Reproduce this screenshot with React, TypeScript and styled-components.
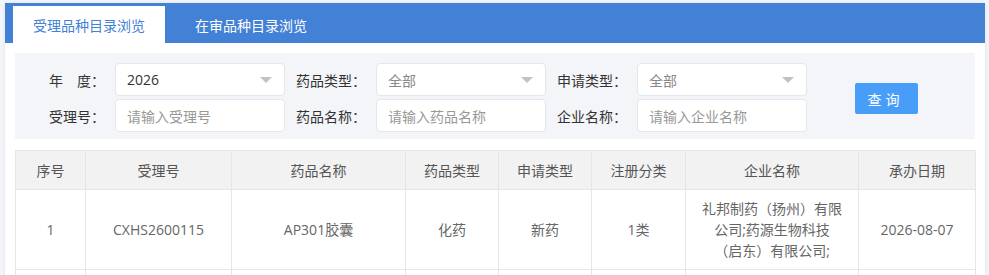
import styled, { createGlobalStyle } from "styled-components";

const GlobalStyle = createGlobalStyle`
  html, body {
    margin: 0;
    padding: 0;
    overflow: hidden;
    background: #f3f5f9;
    font-family: "Open Sans", "Noto Sans CJK SC", sans-serif;
  }
`;

const Card = styled.div`
  margin: 3px 4px 0 5px;
  background: #fff;
  box-shadow: 0 0 4px rgba(0, 0, 0, 0.08);
  padding-bottom: 20px;
`;

const TabBar = styled.div`
  display: flex;
  align-items: flex-end;
  height: 40px;
  background: #4381d6;
  padding-left: 8px;
  gap: 10px;
`;

const Tab = styled.div<{ $active?: boolean }>`
  height: 37px;
  padding: 0 20px;
  display: flex;
  align-items: center;
  font-size: 14px;
  color: ${p => (p.$active ? "#4381d6" : "#fff")};
  background: ${p => (p.$active ? "#fff" : "transparent")};
`;

const SearchPanel = styled.div`
  margin: 10px 10px 0;
  background: #f4f5f8;
  padding: 10px 0 7px;
  display: grid;
  grid-template-columns: 90px 170px 71px 170px 71px 170px 1fr;
  grid-template-rows: 33px 33px;
  column-gap: 10px;
  row-gap: 3px;
  align-items: center;
`;

const Label = styled.label`
  font-size: 14px;
  color: #333;
  text-align: right;
  white-space: nowrap;
`;

const Box = styled.div`
  box-sizing: border-box;
  height: 33px;
  background: #fff;
  border: 1px solid #e4e6eb;
  border-radius: 4px;
  padding: 0 11px;
  display: flex;
  align-items: center;
  justify-content: space-between;
  font-size: 14px;
`;

const Value = styled.span<{ $muted?: boolean }>`
  color: ${p => (p.$muted ? "#888" : "#333")};
`;

const Placeholder = styled.span`
  color: #999;
`;

const Arrow = styled.span`
  width: 0;
  height: 0;
  border-left: 6px solid transparent;
  border-right: 6px solid transparent;
  border-top: 6px solid #c2c2c2;
  margin-right: 1px;
`;

const ButtonCell = styled.div`
  grid-column: 7;
  grid-row: 1 / span 2;
  padding-left: 38px;
  padding-top: 2px;
`;

const QueryButton = styled.button`
  width: 63px;
  height: 31px;
  border: none;
  border-radius: 2px;
  background: #479df8;
  color: #fff;
  font-family: inherit;
  font-size: 14px;
  letter-spacing: 4px;
  padding-left: 4px;
`;

const Table = styled.table`
  margin: 11px 10px 0;
  width: 960px;
  border-collapse: collapse;
  table-layout: fixed;
  font-size: 14px;
  color: #666;
`;

const Th = styled.th`
  height: 38px;
  padding: 0;
  background: #f2f2f2;
  border: 1px solid #e6e6e6;
  font-weight: normal;
  color: #555;
  text-align: center;
`;

const Td = styled.td`
  height: 62px;
  padding: 8px 10px;
  border: 1px solid #e6e6e6;
  text-align: center;
  line-height: 21px;
`;

const Line = styled.div`
  white-space: nowrap;
`;

type Row = {
  no: number;
  accept: string;
  name: string;
  type: string;
  apply: string;
  reg: string;
  company: string[];
  date: string;
};

const columns: [string, number][] = [
  ["序号", 70],
  ["受理号", 146],
  ["药品名称", 174],
  ["药品类型", 93],
  ["申请类型", 93],
  ["注册分类", 94],
  ["企业名称", 173],
  ["承办日期", 117],
];

const rows: Row[] = [
  {
    no: 1,
    accept: "CXHS2600115",
    name: "AP301胶囊",
    type: "化药",
    apply: "新药",
    reg: "1类",
    company: ["礼邦制药（扬州）有限", "公司;药源生物科技", "（启东）有限公司;"],
    date: "2026-08-07",
  },
  {
    no: 2,
    accept: "CXHS2600114",
    name: "盐酸特比萘芬片",
    type: "化药",
    apply: "仿制",
    reg: "4类",
    company: ["浙江华海药业股份有限", "公司;"],
    date: "2026-08-07",
  },
];

export default function App() {
  return (
    <>
      <GlobalStyle />
      <Card>
        <TabBar>
          <Tab $active>受理品种目录浏览</Tab>
          <Tab>在审品种目录浏览</Tab>
        </TabBar>
        <SearchPanel>
          <Label>年　度：</Label>
          <Box>
            <Value>2026</Value>
            <Arrow />
          </Box>
          <Label>药品类型：</Label>
          <Box>
            <Value $muted>全部</Value>
            <Arrow />
          </Box>
          <Label>申请类型：</Label>
          <Box>
            <Value $muted>全部</Value>
            <Arrow />
          </Box>
          <ButtonCell>
            <QueryButton>查询</QueryButton>
          </ButtonCell>
          <Label>受理号：</Label>
          <Box>
            <Placeholder>请输入受理号</Placeholder>
          </Box>
          <Label>药品名称：</Label>
          <Box>
            <Placeholder>请输入药品名称</Placeholder>
          </Box>
          <Label>企业名称：</Label>
          <Box>
            <Placeholder>请输入企业名称</Placeholder>
          </Box>
        </SearchPanel>
        <Table>
          <colgroup>
            {columns.map(([title, w]) => (
              <col key={title} style={{ width: w }} />
            ))}
          </colgroup>
          <thead>
            <tr>
              {columns.map(([title]) => (
                <Th key={title}>{title}</Th>
              ))}
            </tr>
          </thead>
          <tbody>
            {rows.map(r => (
              <tr key={r.no}>
                <Td>{r.no}</Td>
                <Td>{r.accept}</Td>
                <Td>{r.name}</Td>
                <Td>{r.type}</Td>
                <Td>{r.apply}</Td>
                <Td>{r.reg}</Td>
                <Td>
                  {r.company.map(l => (
                    <Line key={l}>{l}</Line>
                  ))}
                </Td>
                <Td>{r.date}</Td>
              </tr>
            ))}
          </tbody>
        </Table>
      </Card>
    </>
  );
}
